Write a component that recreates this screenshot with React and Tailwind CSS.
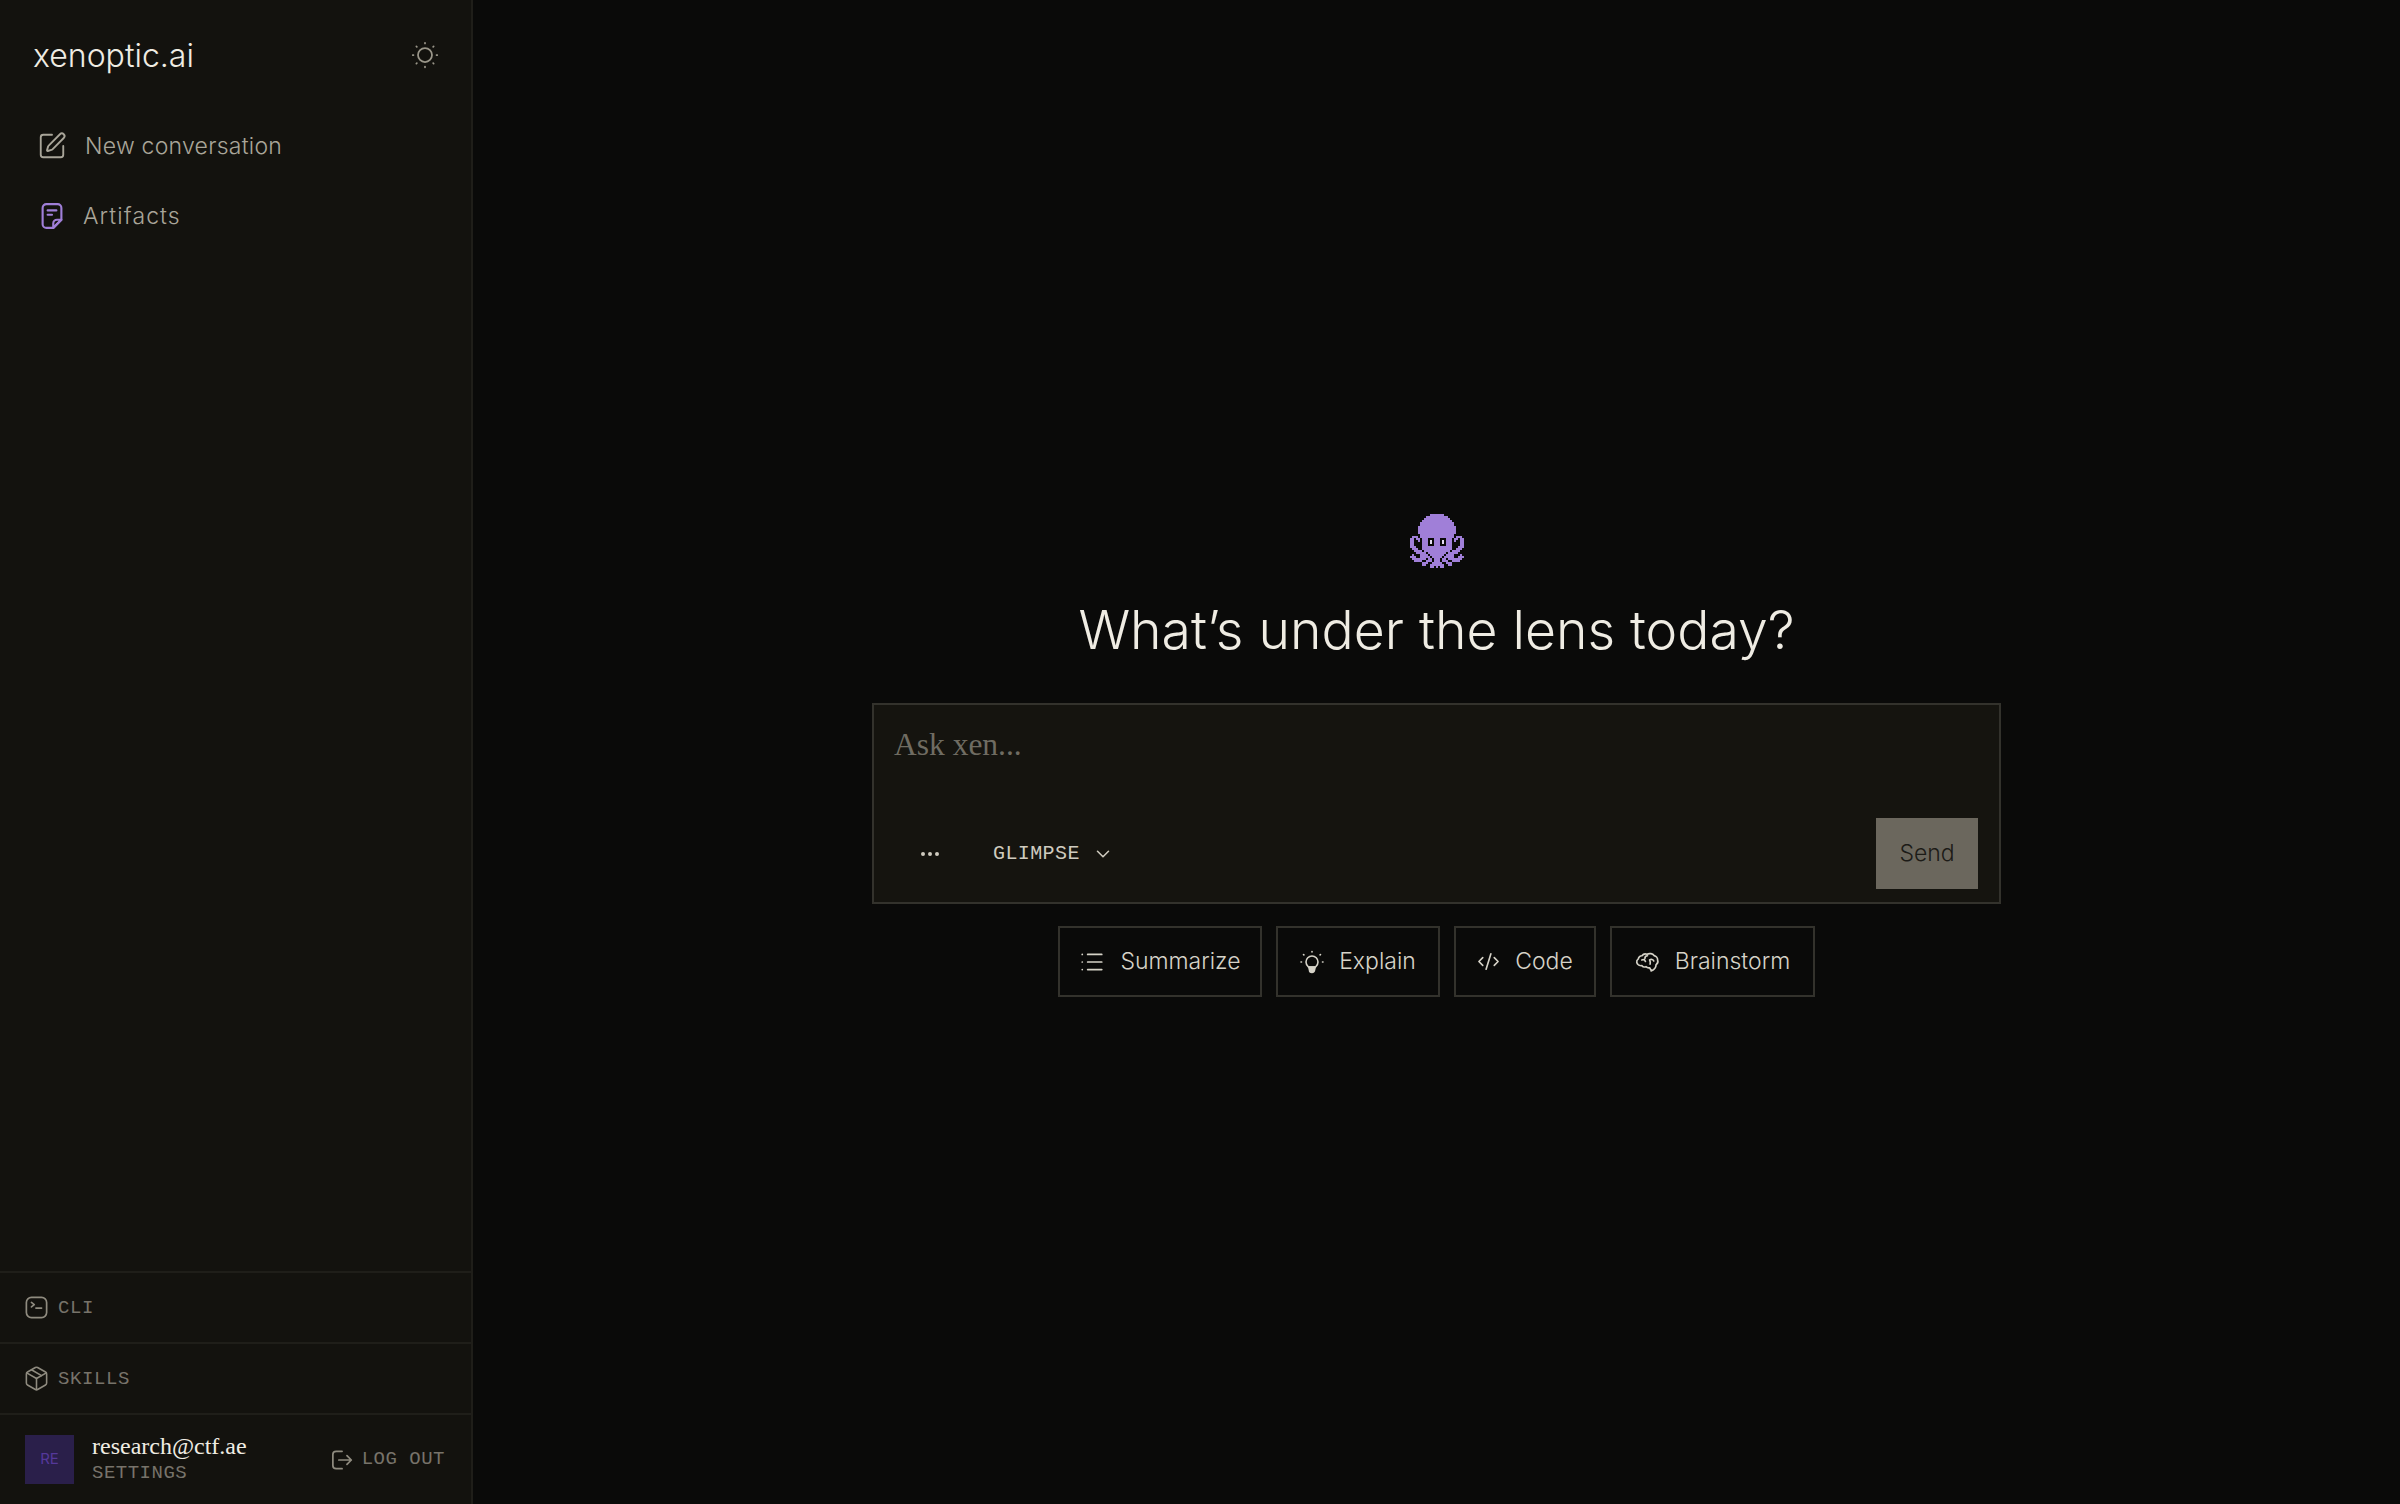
import { SquarePen, List, ChevronDown, CodeXml, Package, Ellipsis } from 'lucide-react';

// left half of the octopus, each row gets mirrored around the last column
const OCTOPUS = [
  '..........####',
  '........######',
  '.......#######',
  '......########',
  '.....#########',
  '.....#########',
  '....##########',
  '....##########',
  '....##########',
  '....##########',
  '.....#########',
  '.###.#########',
  '##.##.########',
  '##..#.########',
  '##....########',
  '##....########',
  '###...########',
  '.###..########',
  '..####.#######',
  '...#####.#####',
  '.#...####.####',
  '###..#####.###',
  '.#######.##.##',
  '..####..###.##',
  '......###..###',
  '......##..####',
  '..........##.#',
];

const Octopus = () => (
  <svg width="54" height="54" viewBox="0 0 27 27" shapeRendering="crispEdges" fill="#a07fd8">
    {OCTOPUS.map((half, y) => {
      const row = half + half.slice(0, -1).split('').reverse().join('');
      return row.split('').map((c, x) => (c === '#' ? <rect key={`${x}-${y}`} x={x} y={y} width="1" height="1" /> : null));
    })}
    <rect x="9" y="12" width="3" height="4" fill="#0a0a09" />
    <rect x="15" y="12" width="3" height="4" fill="#0a0a09" />
    <rect x="10" y="13" width="1" height="2" fill="#e4dcf2" />
    <rect x="16" y="13" width="1" height="2" fill="#e4dcf2" />
  </svg>
);

const icon = { viewBox: '0 0 24 24', fill: 'none', stroke: 'currentColor', strokeLinecap: 'round', strokeLinejoin: 'round' };

const SunDots = (props) => (
  <svg {...icon} strokeWidth="1.5" {...props}>
    <circle cx="12" cy="12" r="6" />
    <path d="M12 1.500v.6M12 21.900v.6M1.500 12h.6M21.900 12h.6M4.600 4.600l.4.4M19 19l.4.4M4.600 19.400l.4-.4M19 5l.4-.4" />
  </svg>
);

const ArtifactIcon = (props) => (
  <svg {...icon} strokeWidth="1.7" {...props}>
    <path d="M13 21.500H7.500a3 3 0 0 1-3-3v-13a3 3 0 0 1 3-3h9a3 3 0 0 1 3 3V15z" />
    <path d="M19.500 15L13 21.500V18a3 3 0 0 1 3-3z" />
    <path d="M8.500 7.500h7M8.500 11h3.500" />
  </svg>
);

const TerminalIcon = (props) => (
  <svg {...icon} strokeWidth="1.5" {...props}>
    <rect x="3" y="3" width="18" height="18" rx="4.500" />
    <path d="M7.500 7.500l2.500 2-2.500 2M11.500 12.500h5" />
  </svg>
);

const LogOutIcon = (props) => (
  <svg {...icon} strokeWidth="1.6" {...props}>
    <path d="M13 4H7.500a3 3 0 0 0-3 3v10a3 3 0 0 0 3 3H13" />
    <path d="M10 12h11.500M17.500 8l4 4-4 4" />
  </svg>
);

const BulbIcon = (props) => (
  <svg {...icon} strokeWidth="1.6" {...props}>
    <path d="M8.500 17c-1-1-2.500-2.200-2.500-5a6 6 0 0 1 12 0c0 2.800-1.500 4-2.500 5z" />
    <path d="M8.800 17h6.400l-.7 3a2.500 2.500 0 0 1-5 0z" fill="currentColor" />
    <path d="M12 1.500v.5M3.500 4.500l.4.4M20.500 4.500l-.4.4M1 12h.5M22.500 12h.5" />
  </svg>
);

const BrainIcon = (props) => (
  <svg {...icon} strokeWidth="1.6" {...props}>
    <path d="M15.500 20.500l-1.500-2.500c-1.500.3-2.500 0-3.500-1-1.500.5-3 .2-3.800-1-2 .3-4.500-.8-5-3-.3-1.500.5-2.800 1.500-3.500.2-1.800 1.800-3.200 3.500-3 1-1.500 3-2.200 4.800-1.500 2.300-1.200 5.500-.6 6.800 1.300 2 .4 3.600 2.300 3.400 4.300.6 1.700 0 3.600-1.500 4.400 0 2-1.200 4.500-4.700 6z" />
    <path d="M12 6.500c-1.500 0-2.500 1-2.500 2.500M6.500 10.500c1.500-.5 3 0 3.500 1.500M14 10.500c1.500-1 3.500-.5 4 1M14.500 14.500c.5-1.500 0-3-.5-4" />
  </svg>
);

const mono = "font-['Liberation_Mono',monospace]";
const grotesk = "font-['Inter',sans-serif]";
const serif = "font-['Liberation_Serif',serif]";

const chips = [
  { label: 'Summarize', icon: <List size={26} strokeWidth={1.6} />, width: 'w-[204px]' },
  { label: 'Explain', icon: <BulbIcon className="w-[24px] h-[24px]" />, width: 'w-[164px]' },
  { label: 'Code', icon: <CodeXml size={23} strokeWidth={1.7} />, width: 'w-[142px]' },
  { label: 'Brainstorm', icon: <BrainIcon className="w-[25px] h-[25px]" />, width: 'w-[205px]' },
];

export default function App() {
  return (
    <div className={`h-[1504px] w-[2400px] flex bg-[#0a0a09] overflow-hidden ${grotesk}`}>
      <aside className="w-[473px] shrink-0 h-full bg-[#13120e] border-r-2 border-[#1f1e19] flex flex-col">
        <div className="h-[111px] pl-[33px] pr-[32px] flex items-center justify-between">
          <span className="text-[32px] font-light text-[#efece3]">xenoptic.ai</span>
          <SunDots className="w-[28px] h-[28px] -mt-[2px] text-[#9a9689]" />
        </div>
        <nav className="flex flex-col pl-[37px]">
          <a className="h-[70px] flex items-center gap-[18px] text-[23px] tracking-[0.25px] font-light text-[#a9a599]">
            <SquarePen size={30} strokeWidth={1.5} className="text-[#a9a599]" />
            New conversation
          </a>
          <a className="h-[70px] flex items-center gap-[16px] text-[23px] tracking-[1.1px] font-light text-[#a9a599]">
            <ArtifactIcon className="w-[30px] h-[30px] text-[#a07fd8]" />
            Artifacts
          </a>
        </nav>
        <div className="mt-auto">
          <div className={`h-[71px] border-t-2 border-[#1f1e19] pl-[23px] pt-[2px] flex items-center gap-[8px] text-[19px] tracking-[0.6px] text-[#77736a] ${mono}`}>
            <TerminalIcon className="w-[27px] h-[27px] -mt-[2px] text-[#8f8b7f]" />
            CLI
          </div>
          <div className={`h-[71px] border-t-2 border-[#1f1e19] pl-[23px] pt-[2px] flex items-center gap-[8px] text-[19px] tracking-[0.6px] text-[#77736a] ${mono}`}>
            <Package size={27} strokeWidth={1.4} className="-mt-[2px] text-[#8f8b7f]" />
            SKILLS
          </div>
          <div className="h-[91px] border-t-2 border-[#1f1e19] pl-[25px] pr-[26px] flex items-center">
            <div className={`w-[49px] h-[49px] bg-[#2a1f4a] flex items-center justify-center text-[15px] text-[#55389a] ${grotesk}`}>RE</div>
            <div className="ml-[18px] flex flex-col">
              <span className={`text-[24px] leading-[27px] text-[#efece3] ${serif}`}>research@ctf.ae</span>
              <span className={`text-[19px] leading-[27px] tracking-[0.5px] text-[#77736a] ${mono}`}>SETTINGS</span>
            </div>
            <div className={`ml-auto flex items-center gap-[8px] text-[19px] tracking-[0.5px] text-[#77736a] ${mono}`}>
              <LogOutIcon className="w-[26px] h-[26px] -ml-[2px] text-[#8f8b7f]" />
              LOG OUT
            </div>
          </div>
        </div>
      </aside>

      <main className="flex-1 flex flex-col items-center pt-[514px]">
        <Octopus />
        <h1 className="mt-[26px] text-[53.500px] leading-[72px] font-light text-[#efece3]">What’s under the lens today?</h1>
        <div className="mt-[37px] w-[1129px] h-[201px] bg-[#15140f] border-2 border-[#33322c] flex flex-col pl-[20px] pr-[21px] pt-[16px] pb-[13px]">
          <div className={`text-[31.500px] leading-[48px] text-[#6f6c62] ${serif}`}>Ask xen...</div>
          <div className="mt-auto flex items-center">
            <Ellipsis size={24} className="ml-[24px] text-[#cfcbbf]" />
            <div className={`ml-[51px] flex items-center gap-[12px] text-[20px] tracking-[0.4px] text-[#cfcbbf] ${mono}`}>
              GLIMPSE
              <ChevronDown size={22} strokeWidth={1.7} />
            </div>
            <button className="ml-auto w-[102px] h-[71px] bg-[#6b675d] text-[23px] font-light text-[#1c1b17]">Send</button>
          </div>
        </div>
        <div className="mt-[22px] flex gap-[14px]">
          {chips.map((chip) => (
            <div key={chip.label} className={`${chip.width} h-[71px] border-2 border-[#33322c] flex items-center justify-center gap-[15px] text-[23px] font-light text-[#d6d3c8]`}>
              {chip.icon}
              {chip.label}
            </div>
          ))}
        </div>
      </main>
    </div>
  );
}
